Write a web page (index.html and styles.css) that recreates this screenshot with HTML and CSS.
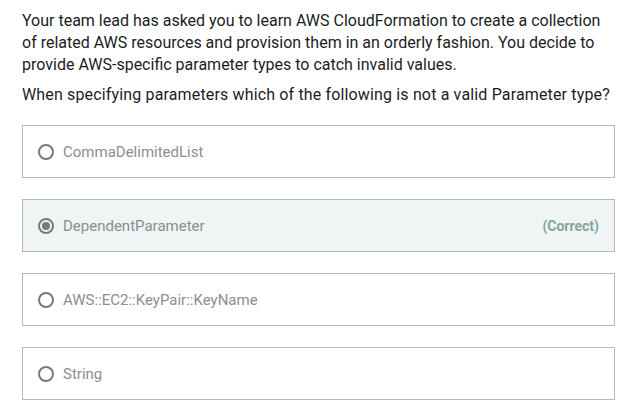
FILE: index.html
```html
<!DOCTYPE html>
<html>
<head>
<meta charset="utf-8">
<link rel="stylesheet" href="styles.css">
</head>
<body>
<div class="question">
  <p class="prompt">Your team lead has asked you to learn AWS CloudFormation to create a collection of related AWS resources and provision them in an orderly fashion. You decide to provide AWS-specific parameter types to catch invalid values.</p>
  <p class="ask">When specifying parameters which of the following is not a valid Parameter type?</p>
  <ul class="options">
    <li class="option"><span class="radio"></span><span class="label">CommaDelimitedList</span></li>
    <li class="option selected"><span class="radio checked"></span><span class="label">DependentParameter</span><span class="status">(Correct)</span></li>
    <li class="option"><span class="radio"></span><span class="label">AWS::EC2::KeyPair::KeyName</span></li>
    <li class="option"><span class="radio"></span><span class="label">String</span></li>
  </ul>
</div>
</body>
</html>
```
FILE: styles.css
```css
* { box-sizing: border-box; }
html, body { margin: 0; padding: 0; background: #fff; }
body { font-family: Roboto, "Liberation Sans", sans-serif; color: #1c1d1f; }
.question { padding: 10px 20px 0 22px; }
.prompt { margin: 0; font-size: 16px; line-height: 22px; }
.ask { margin: 8px 0 0; font-size: 16px; line-height: 22px; letter-spacing: 0.15px; }
.options { list-style: none; margin: 19px 0 0; padding: 0; display: flex; flex-direction: column; gap: 21px; }
.option { height: 53px; border: 1px solid #b6b8ba; display: flex; align-items: center; padding: 0 15px; font-size: 15px; color: #8e8e8e; }
.option.selected { background: #eff4f4; }
.radio { width: 16px; height: 16px; border: 2px solid #7a7a7a; border-radius: 50%; margin-right: 9px; flex: none; position: relative; }
.radio.checked::after { content: ""; position: absolute; left: 2px; top: 2px; width: 8px; height: 8px; border-radius: 50%; background: #7a7a7a; }
.label { flex: 1; }
.status { font-weight: 700; color: #83a89a; font-size: 14px; }
```
